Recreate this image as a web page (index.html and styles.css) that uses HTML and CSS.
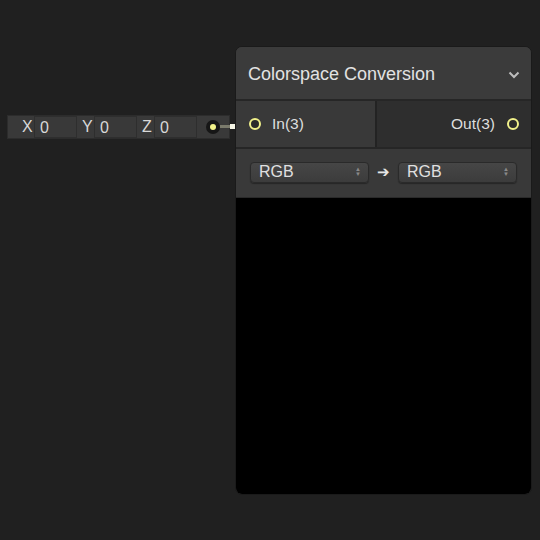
FILE: index.html
```html
<!DOCTYPE html>
<html lang="en">

<head>
    <meta charset="UTF-8">
    <meta name="viewport" content="width=device-width, initial-scale=1.0">
    <title>Colorspace Conversion</title>
    <link rel="stylesheet" href="styles.css">
</head>

<body>
    <div id="graph">
        <!-- vector input node -->
        <div class="vec-node">
            <span class="axis">X</span><span class="field">0</span>
            <span class="axis">Y</span><span class="field">0</span>
            <span class="axis">Z</span><span class="field">0</span>
            <span class="out-dot"></span>
        </div>

        <!-- edge between the two nodes -->
        <div class="edge"><span class="knot"></span></div>

        <div class="node">
            <div class="node-head">
                <span class="title">Colorspace Conversion</span>
                <svg class="chevron" width="12" height="8" viewBox="0 0 12 8">
                    <path d="M1.5 1.5 L6 6 L10.5 1.5" fill="none" stroke="#bdbdbd" stroke-width="2" />
                </svg>
            </div>
            <div class="ports">
                <div class="port port-in">
                    <span class="slot"></span>
                    <span>In(3)</span>
                </div>
                <div class="port port-out">
                    <span>Out(3)</span>
                    <span class="slot"></span>
                </div>
            </div>
            <div class="controls">
                <div class="select">
                    <span>RGB</span>
                    <span class="updown">&#9650;<br>&#9660;</span>
                </div>
                <span class="arrow">&#10132;</span>
                <div class="select">
                    <span>RGB</span>
                    <span class="updown">&#9650;<br>&#9660;</span>
                </div>
            </div>
            <div class="preview"></div>
        </div>
    </div>
</body>

</html>
```

FILE: styles.css
```css
* {
    margin: 0;
    padding: 0;
    box-sizing: border-box;
}

body {
    background-color: #202020;
    font-family: "Liberation Sans", Arial, sans-serif;
    color: #dcdcdc;
}

#graph {
    position: relative;
    width: 540px;
    height: 540px;
    overflow: hidden;
}

/* ---- vector node ---- */
.vec-node {
    position: absolute;
    left: 7px;
    top: 115px;
    width: 223px;
    height: 24px;
    background-color: #393939;
    border: 1px solid #2c2c2c;
    display: flex;
    align-items: center;
    padding-left: 14px;
    font-size: 16px;
    color: #d8d8d8;
}

.vec-node .axis {
    width: 12px;
    text-align: left;
}

.vec-node .field {
    width: 43px;
    height: 22px;
    line-height: 22px;
    border: 1px solid #2e2e2e;
    background-color: #393939;
    padding-left: 5px;
    margin-right: 5px;
}

.out-dot {
    width: 14px;
    height: 14px;
    border-radius: 50%;
    background-color: #161616;
    margin-left: 4px;
    display: flex;
    align-items: center;
    justify-content: center;
}

.out-dot::after {
    content: "";
    width: 6px;
    height: 6px;
    border-radius: 50%;
    background-color: #f2f28a;
}

.edge {
    position: absolute;
    left: 220px;
    top: 125px;
    width: 29px;
    height: 3px;
    background-color: #7b7b6c;
}

.knot {
    position: absolute;
    left: 10px;
    top: -1px;
    width: 5px;
    height: 5px;
    background-color: #f5f5e6;
}

/* ---- main node ---- */
.node {
    position: absolute;
    left: 235px;
    top: 46px;
    width: 297px;
    height: 449px;
    border: 1px solid #1a1a1a;
    border-radius: 7px;
    background-color: #393939;
    overflow: hidden;
    display: flex;
    flex-direction: column;
}

.node-head {
    height: 54px;
    display: flex;
    align-items: center;
    justify-content: space-between;
    padding: 3px 11px 0 12px;
    background-color: #3b3b3b;
    border-bottom: 2px solid #262626;
}

.title {
    font-size: 18px;
    color: #e2e2e2;
}

.chevron {
    margin-top: 1px;
}

.ports {
    height: 48px;
    display: flex;
    border-bottom: 2px solid #262626;
}

.port {
    display: flex;
    align-items: center;
    gap: 11px;
    font-size: 15.5px;
    color: #dedede;
}

.port-in {
    width: 141px;
    padding-left: 13px;
    background-color: #393939;
    border-right: 2px solid #232323;
}

.port-out {
    flex: 1;
    justify-content: flex-end;
    padding-right: 12px;
    gap: 12px;
    background-color: #2e2e2e;
}

.slot {
    width: 12px;
    height: 12px;
    border-radius: 50%;
    border: 2px solid #f0f08a;
    background-color: #2a2a2a;
}

.controls {
    height: 49px;
    display: flex;
    align-items: center;
    padding: 0 14px 2px;
    background-color: #393939;
    border-bottom: 1px solid #2a2a2a;
}

.select {
    width: 119px;
    height: 21px;
    border: 1px solid #2a2a2a;
    border-radius: 4px;
    background: linear-gradient(#464646, #3c3c3c);
    box-shadow: 0 1px 1px rgba(0, 0, 0, 0.35);
    display: flex;
    align-items: center;
    justify-content: space-between;
    padding: 0 7px 0 8px;
    font-size: 16px;
    color: #e0e0e0;
}

.updown {
    font-size: 6px;
    line-height: 5px;
    color: #8a8a8a;
    text-align: center;
}

.arrow {
    width: 29px;
    text-align: center;
    font-size: 15px;
    color: #e6e6e6;
}

.preview {
    flex: 1;
    background-color: #000;
}
```
